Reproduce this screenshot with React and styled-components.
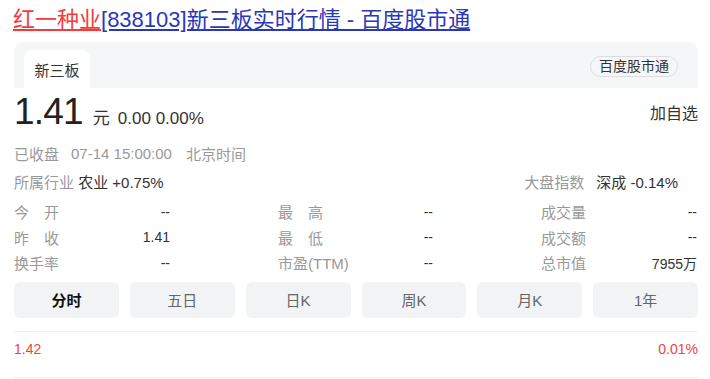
import styled, { createGlobalStyle } from 'styled-components';

const GlobalStyle = createGlobalStyle`
  body {
    margin: 0;
    background: #fff;
    font-family: "Liberation Sans", "Noto Sans CJK SC", sans-serif;
    color: #333;
  }
`;

const Page = styled.div`
  width: 710px;
  padding: 5px 12px 0 14px;
  box-sizing: border-box;
`;

const Title = styled.h1`
  margin: 0 0 7px -1px;
  font-size: 22px;
  font-weight: 400;
  line-height: 30px;
  white-space: nowrap;
`;

const TitleLink = styled.a`
  color: ${(p) => (p.$red ? '#f53c3c' : '#2a38b8')};
  text-decoration: underline;
  text-underline-offset: 2px;
`;

const Card = styled.div`
  width: 684px;
`;

const CardHead = styled.div`
  height: 46px;
  background: #f5f6f8;
  border-radius: 10px 10px 0 0;
  display: flex;
  align-items: flex-end;
  justify-content: space-between;
  padding: 0 20px 0 10px;
`;

const Tab = styled.div`
  width: 66px;
  height: 38px;
  background: #fff;
  border-radius: 8px 8px 0 0;
  font-size: 15px;
  display: flex;
  align-items: center;
  justify-content: center;
  color: #333;
`;

const Badge = styled.div`
  align-self: center;
  margin-top: 2px;
  height: 19px;
  padding: 0 8px;
  border: 1px solid #dcdde0;
  border-radius: 11px;
  font-size: 14px;
  line-height: 19px;
  color: #333;
`;

const PriceRow = styled.div`
  display: flex;
  align-items: center;
  justify-content: space-between;
  height: 51px;
  padding-bottom: 3px;
  box-sizing: border-box;
`;

const PriceLeft = styled.div`
  display: flex;
  align-items: baseline;
  gap: 8px;
`;

const Price = styled.span`
  font-size: 37px;
  letter-spacing: -0.8px;
  color: #222;
`;

const Unit = styled.span`
  font-size: 17px;
  color: #333;
  margin-left: 2px;
`;

const Change = styled.span`
  font-size: 17px;
  color: #333;
`;

const AddFav = styled.span`
  font-size: 16px;
  color: #333;
`;

const InfoLine = styled.div`
  display: flex;
  justify-content: ${(p) => p.$spread ? 'space-between' : 'flex-start'};
  align-items: center;
  height: 28px;
  font-size: 15px;
  color: #999;
  padding-right: ${(p) => p.$spread ? '20px' : '0'};
`;

const Gap = styled.span`
  margin-left: ${(p) => p.$w}px;
`;

const Dark = styled.span`
  color: #333;
`;

const Stats = styled.div`
  display: grid;
  grid-template-columns: 156px 155px 156px;
  column-gap: 108px;
  margin-top: 4px;
`;

const Stat = styled.div`
  display: flex;
  justify-content: space-between;
  align-items: center;
  height: 25.5px;
  font-size: 15px;
`;

const Label = styled.span`
  color: #999;
  letter-spacing: ${(p) => p.$spaced ? '15px' : '0'};
`;

const Value = styled.span`
  color: #333;
  font-size: 14px;
`;

const Periods = styled.div`
  display: grid;
  grid-template-columns: repeat(6, 1fr);
  gap: 11px;
  margin-top: 6px;
`;

const Period = styled.button`
  height: 36px;
  border: none;
  border-radius: 6px;
  background: #f2f3f5;
  font-family: inherit;
  font-size: 15px;
  font-weight: ${(p) => p.$active ? 700 : 400};
  color: ${(p) => p.$active ? '#111' : '#666'};
`;

const Chart = styled.div`
  margin-top: 13px;
  border-top: 1px solid #eeeff1;
  border-bottom: 1px solid #eeeff1;
  height: 47px;
  display: flex;
  justify-content: space-between;
  padding-top: 9px;
  box-sizing: border-box;
  font-size: 14px;
  color: #f5413f;
`;

const stats = [
  [['今开', '--', true], ['最高', '--', true], ['成交量', '--']],
  [['昨收', '1.41', true], ['最低', '--', true], ['成交额', '--']],
  [['换手率', '--'], ['市盈(TTM)', '--'], ['总市值', '7955万']],
];

const periods = ['分时', '五日', '日K', '周K', '月K', '1年'];

export default function App() {
  return (
    <Page>
      <GlobalStyle />
      <Title>
        <TitleLink $red>红一种业</TitleLink>
        <TitleLink>[838103]新三板实时行情 - 百度股市通</TitleLink>
      </Title>
      <Card>
        <CardHead>
          <Tab>新三板</Tab>
          <Badge>百度股市通</Badge>
        </CardHead>
        <PriceRow>
          <PriceLeft>
            <Price>1.41</Price>
            <Unit>元</Unit>
            <Change>0.00 0.00%</Change>
          </PriceLeft>
          <AddFav>加自选</AddFav>
        </PriceRow>
        <InfoLine>
          已收盘<Gap $w={12}>07-14 15:00:00</Gap><Gap $w={14}>北京时间</Gap>
        </InfoLine>
        <InfoLine $spread>
          <span>所属行业 <Dark>农业 +0.75%</Dark></span>
          <span>大盘指数<Gap $w={12}><Dark>深成 -0.14%</Dark></Gap></span>
        </InfoLine>
        <Stats>
          {stats.map((row) =>
            row.map(([label, value, spaced]) => (
              <Stat key={label}>
                <Label $spaced={spaced}>{label}</Label>
                <Value>{value}</Value>
              </Stat>
            ))
          )}
        </Stats>
        <Periods>
          {periods.map((p, i) => (
            <Period key={p} $active={i === 0}>{p}</Period>
          ))}
        </Periods>
        <Chart>
          <span>1.42</span>
          <span>0.01%</span>
        </Chart>
      </Card>
    </Page>
  );
}
